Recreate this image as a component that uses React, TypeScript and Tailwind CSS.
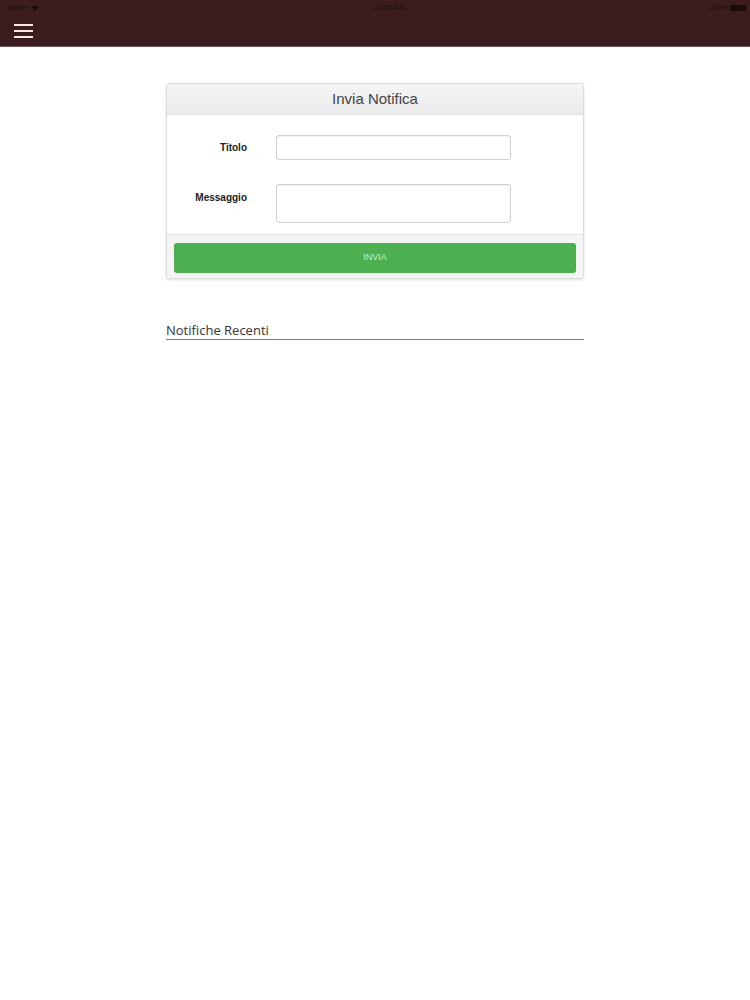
import React from 'react';

function StatusBar() {
  return (
    <div className="flex h-[15px] items-center justify-between px-[4px] text-[8px] leading-none text-[#1a0c0d]" style={{ fontFamily: '"Liberation Sans", Arial, sans-serif' }}>
      <div className="flex items-center gap-[3px]">
        <span>Carrier</span>
        <svg width="8" height="6" viewBox="0 0 8 6" fill="#1a0c0d">
          <path d="M4 6 L0.5 2 A5 5 0 0 1 7.5 2 Z" />
        </svg>
      </div>
      <span className="ml-[30px]">12:45 AM</span>
      <div className="flex items-center gap-[2px]">
        <span>100%</span>
        <div className="h-[6px] w-[16px] rounded-[1px] bg-[#1a0c0d]" />
      </div>
    </div>
  );
}

export default function App() {
  return (
    <div className="min-h-[1000px] bg-white" style={{ fontFamily: '"Liberation Sans", Arial, sans-serif' }}>
      <div className="h-[47px] border-b border-[#6b5658] bg-[#3d1c1f]">
        <StatusBar />
        <div className="flex h-[31px] items-center pl-[14px]">
          <div className="flex w-[19px] flex-col gap-[4px]">
            <div className="h-[2px] bg-[#f3e8e8]" />
            <div className="h-[2px] bg-[#f3e8e8]" />
            <div className="h-[2px] bg-[#f3e8e8]" />
          </div>
        </div>
      </div>

      <div className="mx-auto w-[418px] pt-[36px]">
        <div className="overflow-hidden rounded-[3px] border border-[#dcdcdc] bg-white shadow-[0_1px_3px_rgba(0,0,0,0.12)]">
          <div className="flex h-[31px] items-center justify-center border-b border-[#e0e0e0] bg-gradient-to-b from-[#f5f5f5] to-[#ebebeb] text-[15px] text-[#444]">
            Invia Notifica
          </div>
          <div className="px-[8px] pt-[20px] pb-[11px]">
            <div className="flex items-center">
              <label className="w-[72px] text-right text-[10px] font-bold text-[#222]">Titolo</label>
              <input className="ml-[29px] h-[25px] w-[235px] rounded-[3px] border border-[#cfcfcf] bg-white outline-none shadow-[inset_0_1px_1px_rgba(0,0,0,0.06)]" />
            </div>
            <div className="mt-[24px] flex items-start">
              <label className="w-[72px] pt-[6px] text-right text-[10px] font-bold text-[#222]">Messaggio</label>
              <textarea className="ml-[29px] h-[39px] w-[235px] resize-none rounded-[3px] border border-[#cfcfcf] bg-white outline-none shadow-[inset_0_1px_1px_rgba(0,0,0,0.06)]" />
            </div>
          </div>
          <div className="border-t border-[#e3e3e3] bg-[#f5f5f5] px-[7px] pt-[8px] pb-[5px]">
            <button className="flex h-[30px] w-full items-center justify-center rounded-[3px] bg-[#4caf50] text-[9px] text-[#c9f2c4]">
              INVIA
            </button>
          </div>
        </div>

        <div className="mt-[42px] border-b-[1.5px] border-[#7a7a7a] text-[13px] leading-[18px] text-[#333]" style={{ fontFamily: '"Open Sans", sans-serif' }}>
          Notifiche Recenti
        </div>
      </div>
    </div>
  );
}
